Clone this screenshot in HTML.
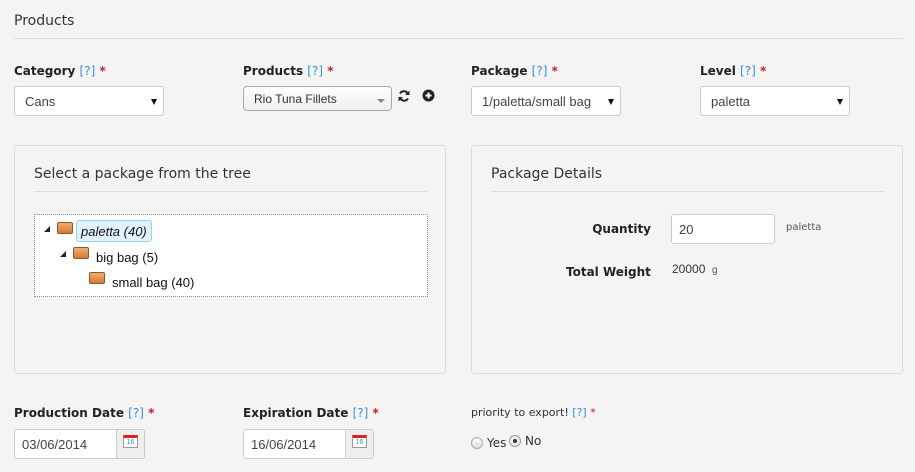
<!DOCTYPE html>
<html><head><meta charset="utf-8"><style>
*{box-sizing:border-box;margin:0;padding:0}
body{width:915px;height:472px;background:#f4f4f4;font-family:"DejaVu Sans","Liberation Sans",sans-serif;color:#333;position:relative;overflow:hidden;font-size:12px}
.a{position:absolute}
h1{position:absolute;left:14px;top:13px;font-size:14px;font-weight:normal;color:#333}
.hr{position:absolute;left:14px;width:889px;height:1px;background:#ddd;top:38px}
.lbl{position:absolute;font-weight:bold;font-size:12px;color:#222;white-space:nowrap}
.lbl span.q{color:#3a8fd6;font-weight:normal}
.lbl span.r{color:#c0202a}
.sel{position:absolute;height:30px;background:#fff;border:1px solid #ccc;border-radius:3px;font-family:"Liberation Sans",sans-serif;font-size:13px;color:#444;padding:7px 0 0 10px}
.sel.dd:after{content:"";position:absolute;right:6px;top:12px;border-left:3.5px solid transparent;border-right:3.5px solid transparent;border-top:6px solid #111}
.panel{position:absolute;top:145px;width:432px;height:229px;border:1px solid #ddd;border-radius:3px;background:#f4f4f4}
.ph{position:absolute;left:19px;top:20px;font-size:14px;color:#333}
.pl{position:absolute;left:19px;top:45px;width:393px;height:1px;background:#ddd}
.box{display:inline-block;width:16px;height:12px;border:1px solid #8a5a2a;border-radius:2px;background:linear-gradient(#f0b070,#d87838);position:absolute}
.tri{position:absolute;width:0;height:0;border-left:6px solid transparent;border-bottom:6px solid #222}
.tree{font-family:"Liberation Sans","DejaVu Sans",sans-serif;font-size:13px;color:#111;position:absolute}
.date{position:absolute;height:30px;width:131px;background:#fff;border:1px solid #ccc;border-radius:3px;font-family:"Liberation Sans",sans-serif;font-size:13px;color:#444;padding:7px 0 0 7px}
.date .btn{position:absolute;right:0;top:0;width:28px;height:28px;background:#eee;border-left:1px solid #ccc}
.cal{position:absolute;left:6px;top:5px;width:15px;height:13px;background:#fff;border:1px solid #999;border-top:3px solid #d22;font-size:7px;color:#3a8fd6;text-align:center;line-height:9px}
</style></head><body>
<h1>Products</h1>
<div class="hr"></div>

<div class="lbl" style="left:14px;top:64px">Category <span class="q">[?]</span> <span class="r">*</span></div>
<div class="sel dd" style="left:14px;top:86px;width:150px">Cans</div>

<div class="lbl" style="left:243px;top:64px">Products <span class="q">[?]</span> <span class="r">*</span></div>
<div class="sel" style="left:243px;top:86px;width:149px;height:25px;padding-top:5px;border-color:#aaa;border-radius:4px;background:linear-gradient(#fff,#eee);font-size:12px;color:#333">Rio Tuna Fillets</div>
<div class="a" style="left:377px;top:99px;border-left:4px solid transparent;border-right:4px solid transparent;border-top:4px solid #888"></div>
<svg class="a" style="left:397px;top:89px" width="14" height="14" viewBox="0 0 14 14"><path d="M11 5A4.5 4.5 0 0 0 3 4.5M3 9a4.5 4.5 0 0 0 8 .5" fill="none" stroke="#222" stroke-width="2"/><path d="M12.5 1.5v4.5h-4.5z M1.5 12.5V8h4.5z" fill="#222"/></svg>
<svg class="a" style="left:422px;top:89px" width="13" height="13" viewBox="0 0 13 13"><circle cx="6.5" cy="6.5" r="6" fill="#222"/><path d="M6.5 3.5v6M3.5 6.5h6" stroke="#fff" stroke-width="2"/></svg>

<div class="lbl" style="left:471px;top:64px">Package <span class="q">[?]</span> <span class="r">*</span></div>
<div class="sel dd" style="left:471px;top:86px;width:150px">1/paletta/small bag</div>

<div class="lbl" style="left:700px;top:64px">Level <span class="q">[?]</span> <span class="r">*</span></div>
<div class="sel dd" style="left:700px;top:86px;width:150px">paletta</div>

<div class="panel" style="left:14px">
<div class="ph">Select a package from the tree</div>
<div class="pl"></div>
<div class="a" style="left:19px;top:68px;width:394px;height:83px;border:1px dotted #888;background:#fff"></div>
</div>
<div class="tri" style="left:44px;top:226px"></div>
<div class="box" style="left:57px;top:222px"></div>
<div class="a" style="left:76px;top:220px;width:76px;height:22px;background:#e2f2fc;border:1px solid #9ad0f2;border-radius:3px"></div>
<div class="tree" style="left:81px;top:224px;font-style:italic">paletta (40)</div>
<div class="tri" style="left:60px;top:251px"></div>
<div class="box" style="left:73px;top:247px"></div>
<div class="tree" style="left:96px;top:250px">big bag (5)</div>
<div class="box" style="left:89px;top:272px"></div>
<div class="tree" style="left:112px;top:275px">small bag (40)</div>

<div class="panel" style="left:471px">
<div class="ph">Package Details</div>
<div class="pl"></div>
</div>
<div class="lbl" style="left:598px;top:222px;width:53px;text-align:right;direction:rtl">Quantity</div>
<div class="a" style="left:671px;top:214px;width:104px;height:30px;background:#fff;border:1px solid #ccc;border-radius:3px;font-family:'Liberation Sans',sans-serif;font-size:13px;color:#444;padding:7px 0 0 7px">20</div>
<div class="a" style="left:786px;top:222px;font-size:10px;color:#555">paletta</div>
<div class="lbl" style="left:566px;top:265px">Total Weight</div>
<div class="a" style="left:672px;top:262px;font-family:'Liberation Sans',sans-serif;font-size:12px;color:#333">20000 &nbsp;<span style="font-size:10px;color:#555">g</span></div>

<div class="lbl" style="left:14px;top:406px">Production Date <span class="q">[?]</span> <span class="r">*</span></div>
<div class="date" style="left:14px;top:429px">03/06/2014<div class="btn"><div class="cal">16</div></div></div>
<div class="lbl" style="left:243px;top:406px">Expiration Date <span class="q">[?]</span> <span class="r">*</span></div>
<div class="date" style="left:243px;top:429px">16/06/2014<div class="btn"><div class="cal">16</div></div></div>

<div class="a" style="left:471px;top:406px;font-size:11px;color:#333">priority to export! <span style="color:#3a8fd6">[?]</span> <span style="color:#c0202a">*</span></div>
<div class="a" style="left:471px;top:437px;width:12px;height:12px;border:1px solid #aaa;border-radius:50%;background:linear-gradient(#fff,#ddd)"></div>
<div class="a" style="left:487px;top:436px;font-size:12px">Yes</div>
<div class="a" style="left:509px;top:435px;width:12px;height:12px;border:1px solid #999;border-radius:50%;background:#eee"><div style="margin:3px;width:4px;height:4px;border-radius:50%;background:#333"></div></div>
<div class="a" style="left:525px;top:434px;font-size:12px">No</div>
</body></html>
